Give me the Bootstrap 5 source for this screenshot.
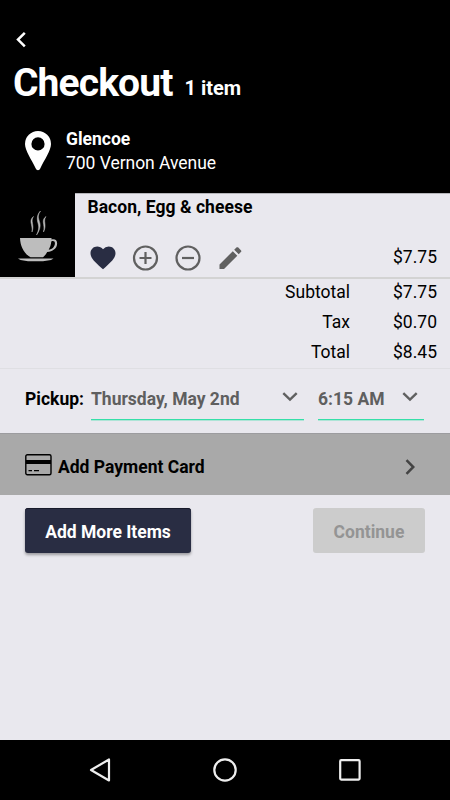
<!DOCTYPE html>
<html lang="en">
<head>
<meta charset="utf-8">
<meta name="viewport" content="width=device-width, initial-scale=1">
<title>Checkout</title>
<link rel="stylesheet" href="https://cdn.jsdelivr.net/npm/bootstrap@5.3.0/dist/css/bootstrap.min.css">
<style>
body{font-family:Roboto,"Liberation Sans",sans-serif;font-size:17.5px;line-height:24px;color:#000;background:#e9e8ee}
svg{display:block;flex:none}
.screen{width:450px;height:800px}
.top-bar{height:193px;background:#000;color:#fff}
.back{padding:31px 0 0 16px;height:63px}
.page-title{height:40px;padding-left:13px;gap:12px}
.page-title h1{font-size:39px;line-height:41px;letter-spacing:-.9px}
.count{font-size:20px;transform:translateY(-1px)}
.place{padding:24px 0 0 25px;gap:15px}
.address{letter-spacing:-.04px}
.item-row{height:86px;border-bottom:2px solid #d3d3d3}
.thumb{width:75px;height:84px;background:#000;padding:18px 0 0 17px}
.item-body{padding:1px 13px 0 12.5px;border-top:1px solid #b5b5b9}
.item-name{letter-spacing:.04px}
.tools{height:26px;margin-top:26px}
.item-price{margin-top:-3px}
.totals{height:90px;padding-right:13px;border-bottom:1px solid #dfdfe3}
.totals>div{height:30px;line-height:27px}
.amount{width:87px;text-align:right}
.pickup{height:64px;padding:15px 26px 0 25px}
.picker{height:36px;border-bottom:1px solid #35dfa8;box-shadow:0 1px #35dfa855;padding:0 6px 6px 0}
.picker span{color:#5f5f5f}
.pick-label{width:66px;padding-top:3px}
.date{width:213px}
.time{width:106px;margin-left:14px}
.pay{height:62px;background:#a9a9a9;padding:4px 35px 0 25px;border-top:1px solid #9c9c9f}
.pay-label{margin-left:6px}
.actions{padding:13px 25px 0}
.actions .btn{height:45px;border-radius:3px;font-size:17.5px;font-weight:700;border:0;padding:3px 0 0;opacity:1}
.btn-more{width:166px;background:#292d43!important;color:#fff!important;box-shadow:0 2px 3px #0005,inset 0 1px #171a2a}
.btn-next{width:112px;background:#ccc!important;color:#949494!important}
.nav-keys{height:60px;background:#000;padding:0 89px 0 87px}
</style>
</head>
<body>
<div class="screen d-flex flex-column overflow-hidden">
  <header class="top-bar">
    <div class="back"><svg width="10" height="17" viewBox="0 0 10 17" fill="none" stroke="#fff" stroke-width="2.500"><path d="M8.800 1.800 2 8.600l6.800 6.800"/></svg></div>
    <div class="page-title d-flex align-items-baseline">
      <h1 class="fw-bold m-0">Checkout</h1><span class="count fw-bold">1 item</span>
    </div>
    <div class="place d-flex">
      <svg class="mt-1" width="26" height="40" viewBox="0 0 26 40"><path fill="#fff" fill-rule="evenodd" d="M13 0a13 13 0 0 1 13 13c0 6.500-6.500 15.500-10.500 24-1.300 3-3.700 3-5 0C6.500 28.500 0 19.500 0 13A13 13 0 0 1 13 0Zm0 6.300a6.600 6.600 0 1 0 0 13.200 6.600 6.600 0 0 0 0-13.200Z"/></svg>
      <div><div class="fw-bold">Glencoe</div><div class="address">700 Vernon Avenue</div></div>
    </div>
  </header>
  <main class="flex-grow-1">
    <section class="item-row d-flex">
      <div class="thumb"><svg width="42" height="54" viewBox="0 0 42 54" fill="#bdbdbd">
        <path fill-rule="evenodd" d="M3 27h31.500v1.500c3.500-1 5.900.7 5.600 4.400-.4 4.600-4.500 7.600-9.900 8.100-1.300 2.200-2.500 4-4.200 5.300H13.500C7 42.500 3.300 35.500 3 27Zm31.300 3.500c-.3 3.300-1.200 5.700-2.600 8.200 3.600-.6 6-3 6.200-6 .2-2.200-1.300-3.300-3.600-2.200Z"/>
        <path d="M1 47.500h35.500l-2.500 1.500-8 1.200H11l-7.500-1.200Z"/>
        <path stroke="#bdbdbd" stroke-width=".5" d="M23.500 0c-5.500 7.500 1.500 10-.8 17.500-.6 2.500-1.800 4.700-3.200 6.500 3-6 2.300-9 1.300-12.500-.9-4-.8-8 2.700-11.500ZM16.500 5.500c-3.500 5 1.300 8-1.500 15.500.5-4-.4-6.500-1-9.500-.4-2.500.7-4.700 2.500-6ZM29 5.500c-3.500 5 1.300 8-2.500 15.500 1-4 .3-6.500-.2-9.500-.4-2.500.9-4.700 2.700-6Z"/>
      </svg></div>
      <div class="item-body flex-grow-1">
        <div class="fw-bold item-name">Bacon, Egg &amp; cheese</div>
        <div class="tools d-flex align-items-center justify-content-between">
          <div class="d-flex align-items-center gap-3">
            <svg width="30" height="28" viewBox="0.500 0 30 28"><path fill="#292d43" d="m15.500 25.300-1.800-1.600C7.200 17.900 3 14 3 9.300 3 5.500 6 2.600 9.700 2.600c2.200 0 4.400 1 5.800 2.700a7.500 7.500 0 0 1 5.700-2.700c3.800 0 6.800 2.900 6.800 6.700 0 4.700-4.200 8.600-10.700 14.400Z"/></svg>
            <svg width="26" height="26" viewBox="1.500 0 26 26" fill="none" stroke="#606060" stroke-width="2.200" overflow="visible"><circle cx="13" cy="13" r="11.500"/><path d="M13 7v12M7 13h12"/></svg>
            <svg width="26" height="26" viewBox="1 0 26 26" fill="none" stroke="#606060" stroke-width="2.200" overflow="visible"><circle cx="13" cy="13" r="11.500"/><path d="M7 13h12"/></svg>
            <svg width="26" height="26" viewBox=".5 0 26 26" fill="#606060"><path d="M2 19.500 15.300 6.200l4.500 4.500L6.500 24H2ZM16.700 4.800l2.200-2.200c.6-.6 1.300-.6 1.900 0l2.600 2.600c.6.600.6 1.300 0 1.900l-2.200 2.200Z"/></svg>
          </div>
          <span class="item-price">$7.75</span>
        </div>
      </div>
    </section>
    <section class="totals">
      <div class="d-flex justify-content-end"><span>Subtotal</span><span class="amount">$7.75</span></div>
      <div class="d-flex justify-content-end"><span>Tax</span><span class="amount">$0.70</span></div>
      <div class="d-flex justify-content-end"><span>Total</span><span class="amount">$8.45</span></div>
    </section>
    <section class="pickup d-flex fw-bold">
      <div class="pick-label">Pickup:</div>
      <div class="picker date d-flex justify-content-between align-items-center"><span>Thursday, May 2nd</span><svg class="mb-1" width="16" height="10" viewBox="0 0 16 10" fill="none" stroke="#606060" stroke-width="2.400"><path d="m1.300 1.200 6.700 6.500 6.700-6.500"/></svg></div>
      <div class="picker time d-flex justify-content-between align-items-center"><span>6:15 AM</span><svg class="mb-1" width="16" height="10" viewBox="0 0 16 10" fill="none" stroke="#606060" stroke-width="2.400"><path d="m1.300 1.200 6.700 6.500 6.700-6.500"/></svg></div>
    </section>
    <section class="pay d-flex align-items-center fw-bold">
      <svg class="mb-1" width="27" height="22" viewBox="0 0 27 22"><rect x=".8" y=".8" width="25.200" height="20" rx="1.500" fill="none" stroke="#000" stroke-width="1.400"/><path d="M1 6h25v4H1ZM3.500 16h3.500v1.300H3.500ZM9 16h5v1.300H9Z"/></svg>
      <span class="pay-label">Add Payment Card</span>
      <svg class="ms-auto" width="10" height="16" viewBox="0 0 10 16" fill="none" stroke="#444" stroke-width="2.500"><path d="m1.500 1.200 6.800 6.800-6.800 6.800"/></svg>
    </section>
    <section class="actions d-flex justify-content-between">
      <button class="btn btn-more" type="button">Add More Items</button>
      <button class="btn btn-next" type="button" disabled>Continue</button>
    </section>
  </main>
  <footer class="nav-keys d-flex align-items-center justify-content-between">
    <svg width="24" height="26" viewBox="-2 0 24 26" fill="none" stroke="#eee" stroke-width="2.200" stroke-linejoin="round"><path d="M20 2.500v21L2 13Z"/></svg>
    <svg width="24" height="24" viewBox="0 0 24 24" fill="none" stroke="#eee" stroke-width="2.200"><circle cx="12" cy="12" r="10.700"/></svg>
    <svg width="22" height="22" viewBox="0 0 22 22" fill="none" stroke="#eee" stroke-width="2.200"><rect x="1.200" y="1.200" width="19.400" height="19.400" rx="1"/></svg>
  </footer>
</div>
<script src="https://cdn.jsdelivr.net/npm/bootstrap@5.3.0/dist/js/bootstrap.bundle.min.js"></script>
</body>
</html>
